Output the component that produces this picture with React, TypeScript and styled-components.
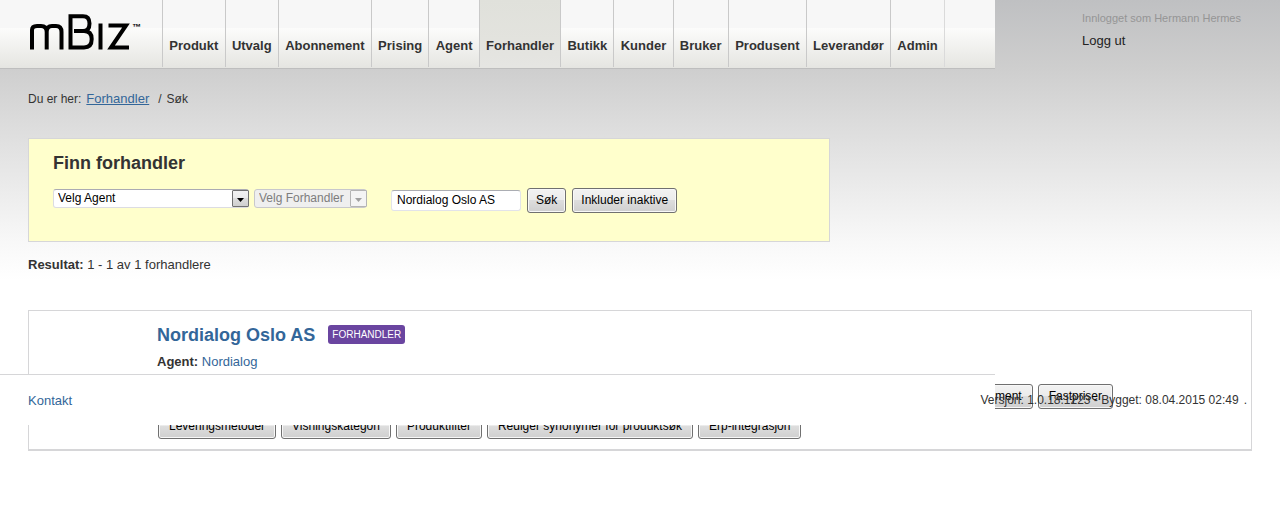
import React from 'react';
import styled, { createGlobalStyle, css } from 'styled-components';

const colors = {
  text: '#333333',
  link: '#336699',
  line: '#d6d6d8',
};

const GlobalStyle = createGlobalStyle`
  * { box-sizing: border-box; }
  body {
    margin: 0;
    color: ${colors.text};
    font: 12px/16px "Liberation Sans", Arial, sans-serif;
    background: #fff linear-gradient(#bfc0c2 0, #cecece 68px, #dcdcdc 124px, #f8f8f8 242px, #fff 280px) no-repeat;
  }
`;

const TopRow = styled.div`
  display: grid;
  grid-template-columns: minmax(0, 1fr) 285px;
`;

const Header = styled.header`
  display: flex;
  height: 69px;
  border-bottom: 1px solid #bebebe;
  background: linear-gradient(#f7f7f7 0, #f7f7f7 28px, #fcfcfb 28px, #e5e5e1 68px);
`;

const LogoLink = styled.a`
  flex: none;
  width: 162px;
  padding: 12px 0 0 28px;
`;

const NavList = styled.ul`
  display: flex;
  width: 783px;
  height: 67px;
  margin: 0;
  padding: 0;
  list-style: none;
  border-left: 1px solid #c9c9c9;
`;

const NavItem = styled.li`
  flex: 1 1 auto;
  border-right: 1px solid #c9c9c9;

  &:last-child { border-right-color: #dadada; }
`;

const NavLink = styled.a<{ $active?: boolean }>`
  display: block;
  height: 100%;
  padding: 38px 5px 0;
  font-size: 13px;
  font-weight: bold;
  text-align: center;
  text-decoration: none;
  color: ${colors.text};
  ${({ $active }) =>
    $active &&
    css`
      background: linear-gradient(#e0e1db, #e3e3de 40px, #e5e5e2);
    `}
`;

const UserBox = styled.div`
  display: flex;
  flex-direction: column;
  align-items: flex-start;
  gap: 7px;
  padding: 10px 0 0 87px;
  font-size: 11px;
  color: #959595;
`;

const LogoutLink = styled.a`
  font-size: 13px;
  text-decoration: none;
  color: #222;
`;

const Content = styled.main`
  padding: 22px 28px 0;
`;

const Breadcrumb = styled.nav`
  display: flex;
  gap: 5px;
`;

const CrumbLink = styled.a`
  margin-right: 4px;
  font-size: 13px;
  color: ${colors.link};
`;

const SearchPanel = styled.form`
  max-width: 802px;
  min-height: 104px;
  margin-top: 31px;
  padding: 14px 24px;
  border: 1px solid ${colors.line};
  background: #ffffcc;
`;

const PanelTitle = styled.h1`
  margin: 0 0 15px;
  font-size: 18px;
  line-height: 20px;
`;

const Fields = styled.div`
  display: flex;
  gap: 6px;
`;

const Selects = styled.div`
  display: flex;
  gap: 5px;
  margin: 1px 18px 0 0;
`;

const SelectBox = styled.div<{ $width: number }>`
  position: relative;
  width: ${({ $width }) => $width}px;
  height: 19px;
`;

const Select = styled.select`
  appearance: none;
  width: 100%;
  height: 19px;
  padding: 0 20px 2px 4px;
  border: 1px solid #dcdce2;
  border-top-color: #ababb3;
  border-radius: 3px;
  font: 12px/16px "Liberation Sans", Arial, sans-serif;
  color: #000;
  background: #fff;

  &:disabled {
    color: #7d7d7d;
    background: #efefef;
    border-color: #c8c8cc;
    opacity: 1;
  }
`;

const ArrowBox = styled.span<{ $disabled?: boolean }>`
  position: absolute;
  top: 1px;
  right: 0;
  display: flex;
  align-items: center;
  justify-content: center;
  width: 17px;
  height: 17px;
  padding-top: 3px;
  border: 1px solid ${({ $disabled }) => ($disabled ? '#b4b4b4' : '#707070')};
  border-radius: 1px;
  color: ${({ $disabled }) => ($disabled ? '#a0a0a0' : '#000')};
  background: ${({ $disabled }) =>
    $disabled ? '#f4f4f4' : 'linear-gradient(#f2f2f2, #ebebeb 50%, #dddddd 50%, #cfcfcf)'};
  pointer-events: none;
`;

const TextInput = styled.input`
  width: 130px;
  height: 21px;
  margin-top: 2px;
  padding: 0 5px 1px;
  border: 1px solid #e2e3ea;
  border-top-color: #abadb3;
  border-radius: 3px;
  font: 12px/16px "Liberation Sans", Arial, sans-serif;
  color: #000;
  background: #fff;
`;

const Button = styled.button`
  flex: none;
  height: 25px;
  padding: 0 8px 1px;
  border: 1px solid #707070;
  border-radius: 3px;
  box-shadow: inset 0 0 0 1px #f8f8f8;
  font: 12px/16px "Liberation Sans", Arial, sans-serif;
  color: #000;
  background: linear-gradient(#f2f2f2, #ebebeb 50%, #dddddd 50%, #cfcfcf);
`;

const CardButton = styled(Button)`
  padding: 0 10px 1px;
`;

const ResultCount = styled.p`
  margin: 15px 0 37px;
  font-size: 13px;
`;

const ResultArea = styled.div`
  position: relative;
`;

const Card = styled.article`
  margin: 0 28px;
  padding: 14px 138px 10px 128px;
  border: 1px solid ${colors.line};
  border-bottom-width: 2px;
  background: #fff;
`;

const CardHead = styled.div`
  display: flex;
  gap: 13px;
`;

const CardTitle = styled.h2`
  margin: 0;
  font-size: 18px;
  line-height: 20px;
`;

const PlainLink = styled.a`
  text-decoration: none;
  color: ${colors.link};
`;

const Badge = styled.span`
  height: 19px;
  padding: 0 4px;
  border-radius: 3px;
  font-size: 10px;
  line-height: 19px;
  color: #fff;
  background: #6a45a0;
`;

const AgentLine = styled.p`
  margin: 9px 0 14px;
  font-size: 13px;
`;

const ButtonRow = styled.div<{ $end?: boolean }>`
  display: flex;
  gap: 5px;
  padding-left: 1px;
  justify-content: ${({ $end }) => ($end ? 'flex-end' : 'flex-start')};

  & + & { margin-top: 5px; }
`;

const Footer = styled.footer`
  position: absolute;
  right: 0;
  bottom: 26px;
  left: 0;
  display: grid;
  grid-template-columns: minmax(0, 1fr) 285px;
`;

const FooterPanel = styled.div`
  grid-area: 1 / 1;
  height: 51px;
  padding: 18px 28px;
  border-top: 1px solid ${colors.line};
  font-size: 13px;
  line-height: 16px;
  background: #fff;
`;

const Version = styled.div`
  grid-area: 1 / 1 / 2 / 3;
  justify-self: end;
  display: flex;
  gap: 5px;
  padding: 18px 33px 0 0;
`;

const Logo = () => (
  <svg width="116" height="40" viewBox="28 12 116 40" fill="none" stroke="#000" strokeWidth="4" role="img" aria-label="mBiz">
    <path d="M32 49.5V30Q32 26 37 26H41Q46.7 26 46.7 32V49.5M46.7 32Q46.7 26 52 26H56Q61.5 26 61.5 32V49.5" />
    <path d="M74 31H84Q91.7 31 91.7 39Q91.7 47.5 84 47.5H70.5V16.2H83Q89.5 16.2 89.5 23.5Q89.5 31 83 31" />
    <path d="M100.5 23.5V49.5" />
    <path d="M108.5 25.5H126L111 47.5H129" />
    <text x="132" y="30" fill="#000" stroke="none" fontSize="9" fontWeight="bold" fontFamily="Liberation Sans">™</text>
  </svg>
);

const navItems = [
  'Produkt', 'Utvalg', 'Abonnement', 'Prising', 'Agent', 'Forhandler', 'Butikk',
  'Kunder', 'Bruker', 'Produsent', 'Leverandør', 'Admin',
];

const settings = ['Leveringsmetoder', 'Visningskategori', 'Produktfilter', 'Rediger synonymer for produktsøk', 'Erp-integrasjon'];

interface DropdownProps {
  label: string;
  width: number;
  disabled?: boolean;
}

const Dropdown = ({ label, width, disabled }: DropdownProps) => (
  <SelectBox $width={width}>
    <Select aria-label={label} disabled={disabled}>
      <option>{label}</option>
    </Select>
    <ArrowBox $disabled={disabled}>
      <svg width="7" height="4" viewBox="0 0 7 4" fill="currentColor" aria-hidden="true">
        <path d="M0 0H7L3.5 4Z" />
      </svg>
    </ArrowBox>
  </SelectBox>
);

export default function App() {
  return (
    <>
      <GlobalStyle />
      <TopRow>
        <Header>
          <LogoLink href="#"><Logo /></LogoLink>
          <nav>
            <NavList>
              {navItems.map((item) => (
                <NavItem key={item}>
                  <NavLink href="#" $active={item === 'Forhandler'}>{item}</NavLink>
                </NavItem>
              ))}
            </NavList>
          </nav>
        </Header>
        <UserBox>
          <span>Innlogget som Hermann Hermes</span>
          <LogoutLink href="#">Logg ut</LogoutLink>
        </UserBox>
      </TopRow>

      <Content>
        <Breadcrumb>
          <span>Du er her:</span>
          <CrumbLink href="#">Forhandler</CrumbLink>
          <span>/</span>
          <span>Søk</span>
        </Breadcrumb>
        <SearchPanel onSubmit={(e) => e.preventDefault()}>
          <PanelTitle>Finn forhandler</PanelTitle>
          <Fields>
            <Selects>
              <Dropdown label="Velg Agent" width={196} />
              <Dropdown label="Velg Forhandler" width={113} disabled />
            </Selects>
            <TextInput aria-label="Søk" defaultValue="Nordialog Oslo AS" />
            <Button type="submit">Søk</Button>
            <Button type="button">Inkluder inaktive</Button>
          </Fields>
        </SearchPanel>
        <ResultCount><strong>Resultat:</strong> 1 - 1 av 1 forhandlere</ResultCount>
      </Content>

      <ResultArea>
        <Card>
          <CardHead>
            <CardTitle><PlainLink href="#">Nordialog Oslo AS</PlainLink></CardTitle>
            <Badge>FORHANDLER</Badge>
          </CardHead>
          <AgentLine><strong>Agent:</strong> <PlainLink href="#">Nordialog</PlainLink></AgentLine>
          <ButtonRow $end>
            <CardButton type="button">Abonnement</CardButton>
            <CardButton type="button">Fastpriser</CardButton>
          </ButtonRow>
          <ButtonRow>
            {settings.map((name) => <CardButton type="button" key={name}>{name}</CardButton>)}
          </ButtonRow>
        </Card>
        <Footer>
          <FooterPanel><PlainLink href="#">Kontakt</PlainLink></FooterPanel>
          <Version>
            <span>Versjon: 1.0.18.1223 - Bygget: 08.04.2015 02:49</span>
            <span>.</span>
          </Version>
        </Footer>
      </ResultArea>
    </>
  );
}
